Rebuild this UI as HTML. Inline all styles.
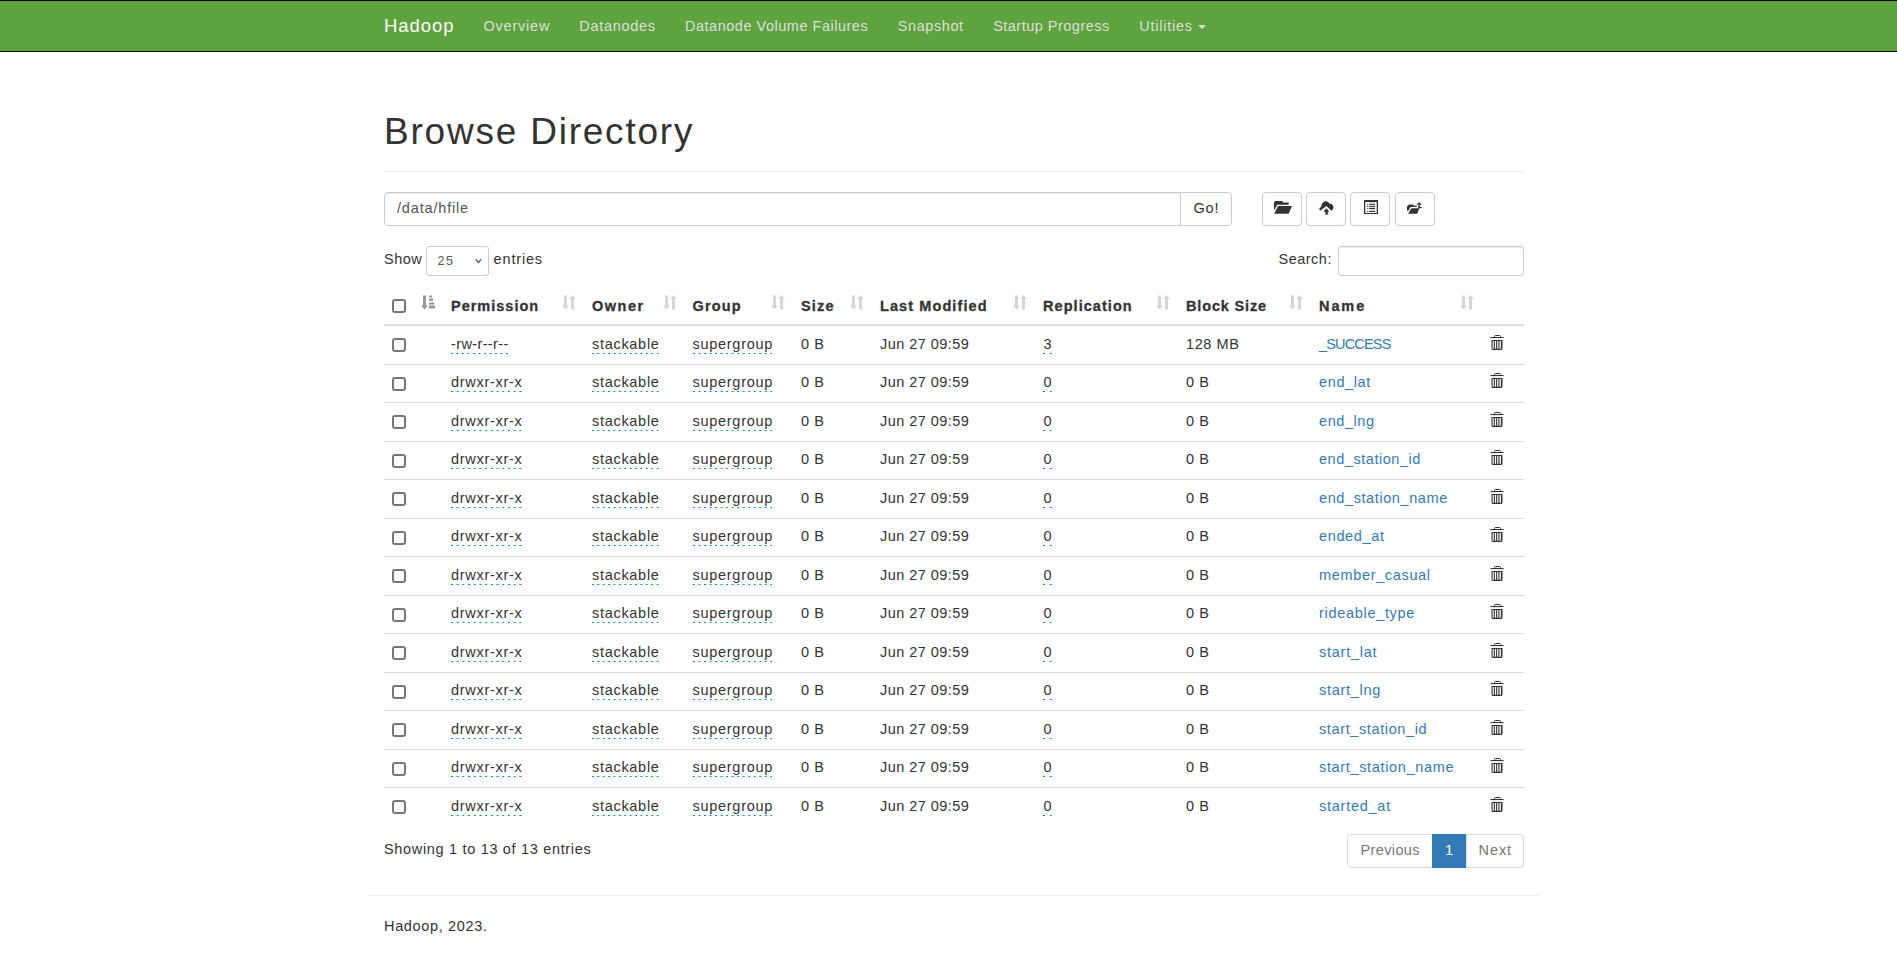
<!DOCTYPE html>
<html><head><meta charset="utf-8"><title>Browsing HDFS</title>
<style>
html,body{margin:0;padding:0;background:#fff;}
body{width:1897px;height:965px;overflow:hidden;position:relative;font-family:"Liberation Sans",sans-serif;}
.t{position:absolute;line-height:40px;white-space:pre;}
.cb{position:absolute;left:392px;width:14px;height:14px;box-sizing:border-box;border:2px solid #767680;border-radius:3px;background:#fff}
</style></head><body>
<div style="position:absolute;left:0px;top:0px;width:1897px;height:50px;background:#5fa33e;border-top:1px solid #080808;border-bottom:1px solid #080808"></div>
<div style="position:absolute;left:1198px;top:25px;width:0;height:0;border-left:4px solid transparent;border-right:4px solid transparent;border-top:4px solid #ddd"></div>
<div style="position:absolute;left:384px;top:171px;width:1140px;height:1px;background:#eee"></div>
<div style="position:absolute;left:384px;top:192px;width:795px;height:32px;border:1px solid #ccc;border-radius:4px 0 0 4px;box-shadow:inset 0 1px 1px rgba(0,0,0,.075);background:#fff"></div>
<div style="position:absolute;left:1180px;top:192px;width:50px;height:32px;border:1px solid #ccc;border-radius:0 4px 4px 0;background:#fff"></div>
<div style="position:absolute;left:1261.5px;top:192px;width:38px;height:32px;border:1px solid #ccc;border-radius:4px;background:#fff"></div>
<div style="position:absolute;left:1305.95px;top:192px;width:38px;height:32px;border:1px solid #ccc;border-radius:4px;background:#fff"></div>
<div style="position:absolute;left:1350.4px;top:192px;width:38px;height:32px;border:1px solid #ccc;border-radius:4px;background:#fff"></div>
<div style="position:absolute;left:1394.85px;top:192px;width:38px;height:32px;border:1px solid #ccc;border-radius:4px;background:#fff"></div>
<div style="position:absolute;left:426.2px;top:246px;width:60.5px;height:28px;border:1px solid #ccc;border-radius:3px;background:#fff"></div>
<div style="position:absolute;left:1338.4px;top:246px;width:183.6px;height:28px;border:1px solid #ccc;border-radius:3px;background:#fff;box-shadow:inset 0 1px 1px rgba(0,0,0,.075)"></div>
<div style="position:absolute;left:384px;top:324px;width:1140px;height:2px;background:#ddd"></div>
<div style="position:absolute;left:384px;top:364px;width:1140px;height:1px;background:#ddd"></div>
<div style="position:absolute;left:384px;top:402px;width:1140px;height:1px;background:#ddd"></div>
<div style="position:absolute;left:384px;top:441px;width:1140px;height:1px;background:#ddd"></div>
<div style="position:absolute;left:384px;top:479px;width:1140px;height:1px;background:#ddd"></div>
<div style="position:absolute;left:384px;top:518px;width:1140px;height:1px;background:#ddd"></div>
<div style="position:absolute;left:384px;top:556px;width:1140px;height:1px;background:#ddd"></div>
<div style="position:absolute;left:384px;top:595px;width:1140px;height:1px;background:#ddd"></div>
<div style="position:absolute;left:384px;top:633px;width:1140px;height:1px;background:#ddd"></div>
<div style="position:absolute;left:384px;top:672px;width:1140px;height:1px;background:#ddd"></div>
<div style="position:absolute;left:384px;top:710px;width:1140px;height:1px;background:#ddd"></div>
<div style="position:absolute;left:384px;top:749px;width:1140px;height:1px;background:#ddd"></div>
<div style="position:absolute;left:384px;top:787px;width:1140px;height:1px;background:#ddd"></div>
<div style="position:absolute;left:1347.4px;top:834px;width:83.2px;height:32px;border:1px solid #ddd;border-radius:4px 0 0 4px;background:#fff"></div>
<div style="position:absolute;left:1465.5px;top:834px;width:56.6px;height:32px;border:1px solid #ddd;border-radius:0 4px 4px 0;background:#fff"></div>
<div style="position:absolute;left:1431.6px;top:834px;width:32.9px;height:32px;border:1px solid #337ab7;background:#337ab7"></div>
<div style="position:absolute;left:369px;top:895px;width:1170px;height:1px;background:#eee"></div>
<div class="t" style="left:384.00px;top:6px;font-size:18.5px;letter-spacing:0.928px;color:#fff">Hadoop</div>
<div class="t" style="left:483.44px;top:6px;font-size:14.5px;letter-spacing:0.783px;color:#ddd">Overview</div>
<div class="t" style="left:579.35px;top:6px;font-size:14.5px;letter-spacing:0.691px;color:#ddd">Datanodes</div>
<div class="t" style="left:685.01px;top:6px;font-size:14.5px;letter-spacing:0.514px;color:#ddd">Datanode Volume Failures</div>
<div class="t" style="left:897.71px;top:6px;font-size:14.5px;letter-spacing:0.596px;color:#ddd">Snapshot</div>
<div class="t" style="left:993.15px;top:6px;font-size:14.5px;letter-spacing:0.490px;color:#ddd">Startup Progress</div>
<div class="t" style="left:1139.31px;top:6px;font-size:14.5px;letter-spacing:0.746px;color:#ddd">Utilities</div>
<div class="t" style="left:384.00px;top:112px;font-size:37px;letter-spacing:1.784px;color:#333">Browse Directory</div>
<div class="t" style="left:397.00px;top:188px;font-size:14.5px;letter-spacing:0.828px;color:#555">/data/hfile</div>
<div class="t" style="left:1193.50px;top:188px;font-size:14.5px;letter-spacing:0.828px;color:#333">Go!</div>
<div class="t" style="left:384.00px;top:239px;font-size:14.5px;letter-spacing:0.500px;color:#333">Show</div>
<div class="t" style="left:437.50px;top:241px;font-size:12.4px;letter-spacing:1.484px;color:#555">25</div>
<div class="t" style="left:493.60px;top:239px;font-size:14.5px;letter-spacing:0.833px;color:#333">entries</div>
<div class="t" style="left:1278.60px;top:239px;font-size:14.5px;letter-spacing:0.474px;color:#333">Search:</div>
<div class="t" style="left:451.00px;top:286px;font-size:14.5px;letter-spacing:0.993px;color:#333;font-weight:bold;-webkit-text-stroke:0.3px #333">Permission</div>
<div class="t" style="left:592.00px;top:286px;font-size:14.5px;letter-spacing:1.520px;color:#333;font-weight:bold;-webkit-text-stroke:0.3px #333">Owner</div>
<div class="t" style="left:692.50px;top:286px;font-size:14.5px;letter-spacing:1.129px;color:#333;font-weight:bold;-webkit-text-stroke:0.3px #333">Group</div>
<div class="t" style="left:801.00px;top:286px;font-size:14.5px;letter-spacing:1.172px;color:#333;font-weight:bold;-webkit-text-stroke:0.3px #333">Size</div>
<div class="t" style="left:880.00px;top:286px;font-size:14.5px;letter-spacing:1.090px;color:#333;font-weight:bold;-webkit-text-stroke:0.3px #333">Last Modified</div>
<div class="t" style="left:1043.00px;top:286px;font-size:14.5px;letter-spacing:1.056px;color:#333;font-weight:bold;-webkit-text-stroke:0.3px #333">Replication</div>
<div class="t" style="left:1186.00px;top:286px;font-size:14.5px;letter-spacing:0.842px;color:#333;font-weight:bold;-webkit-text-stroke:0.3px #333">Block Size</div>
<div class="t" style="left:1319.00px;top:286px;font-size:14.5px;letter-spacing:1.917px;color:#333;font-weight:bold;-webkit-text-stroke:0.3px #333">Name</div>
<div class="t" style="left:451.00px;top:324px;font-size:14.5px;letter-spacing:0.368px;color:#333"><span style="display:inline-block;width:57.25px;height:40px;position:relative">-rw-r--r--<i style="position:absolute;left:0;width:57.25px;top:29px;height:1px;background:linear-gradient(to right,#0088cc 2.2px,transparent 2.2px) 0 0/5.505px 1px repeat-x"></i></span></div>
<div class="t" style="left:592.00px;top:324px;font-size:14.5px;letter-spacing:0.703px;color:#333"><span style="display:inline-block;width:66.89px;height:40px;position:relative">stackable<i style="position:absolute;left:0;width:66.89px;top:29px;height:1px;background:linear-gradient(to right,#0088cc 2.2px,transparent 2.2px) 0 0/5.391px 1px repeat-x"></i></span></div>
<div class="t" style="left:692.50px;top:324px;font-size:14.5px;letter-spacing:0.720px;color:#333"><span style="display:inline-block;width:79.84px;height:40px;position:relative">supergroup<i style="position:absolute;left:0;width:79.84px;top:29px;height:1px;background:linear-gradient(to right,#0088cc 2.2px,transparent 2.2px) 0 0/5.546px 1px repeat-x"></i></span></div>
<div class="t" style="left:801.00px;top:324px;font-size:14.5px;letter-spacing:0.602px;color:#333">0 B</div>
<div class="t" style="left:880.00px;top:324px;font-size:14.5px;letter-spacing:0.462px;color:#333">Jun 27 09:59</div>
<div class="t" style="left:1043.42px;top:324px;font-size:14.5px;letter-spacing:0.844px;color:#333"><span style="display:inline-block;width:8.92px;height:40px;position:relative">3<i style="position:absolute;left:0;width:8.92px;top:29px;height:1px;background:linear-gradient(to right,#0088cc 2.2px,transparent 2.2px) 0 0/6.722px 1px repeat-x"></i></span></div>
<div class="t" style="left:1186.00px;top:324px;font-size:14.5px;letter-spacing:0.575px;color:#333">128 MB</div>
<div class="t" style="left:1319.00px;top:324px;font-size:14.5px;letter-spacing:-0.837px;color:#337ab7">_SUCCESS</div>
<div class="t" style="left:451.00px;top:362px;font-size:14.5px;letter-spacing:0.705px;color:#333"><span style="display:inline-block;width:70.78px;height:40px;position:relative">drwxr-xr-x<i style="position:absolute;left:0;width:70.78px;top:29px;height:1px;background:linear-gradient(to right,#0088cc 2.2px,transparent 2.2px) 0 0/5.715px 1px repeat-x"></i></span></div>
<div class="t" style="left:592.00px;top:362px;font-size:14.5px;letter-spacing:0.703px;color:#333"><span style="display:inline-block;width:66.89px;height:40px;position:relative">stackable<i style="position:absolute;left:0;width:66.89px;top:29px;height:1px;background:linear-gradient(to right,#0088cc 2.2px,transparent 2.2px) 0 0/5.391px 1px repeat-x"></i></span></div>
<div class="t" style="left:692.50px;top:362px;font-size:14.5px;letter-spacing:0.720px;color:#333"><span style="display:inline-block;width:79.84px;height:40px;position:relative">supergroup<i style="position:absolute;left:0;width:79.84px;top:29px;height:1px;background:linear-gradient(to right,#0088cc 2.2px,transparent 2.2px) 0 0/5.546px 1px repeat-x"></i></span></div>
<div class="t" style="left:801.00px;top:362px;font-size:14.5px;letter-spacing:0.602px;color:#333">0 B</div>
<div class="t" style="left:880.00px;top:362px;font-size:14.5px;letter-spacing:0.462px;color:#333">Jun 27 09:59</div>
<div class="t" style="left:1043.42px;top:362px;font-size:14.5px;letter-spacing:0.844px;color:#333"><span style="display:inline-block;width:8.92px;height:40px;position:relative">0<i style="position:absolute;left:0;width:8.92px;top:29px;height:1px;background:linear-gradient(to right,#0088cc 2.2px,transparent 2.2px) 0 0/6.722px 1px repeat-x"></i></span></div>
<div class="t" style="left:1186.00px;top:362px;font-size:14.5px;letter-spacing:0.602px;color:#333">0 B</div>
<div class="t" style="left:1319.00px;top:362px;font-size:14.5px;letter-spacing:0.628px;color:#337ab7">end_lat</div>
<div class="t" style="left:451.00px;top:401px;font-size:14.5px;letter-spacing:0.705px;color:#333"><span style="display:inline-block;width:70.78px;height:40px;position:relative">drwxr-xr-x<i style="position:absolute;left:0;width:70.78px;top:29px;height:1px;background:linear-gradient(to right,#0088cc 2.2px,transparent 2.2px) 0 0/5.715px 1px repeat-x"></i></span></div>
<div class="t" style="left:592.00px;top:401px;font-size:14.5px;letter-spacing:0.703px;color:#333"><span style="display:inline-block;width:66.89px;height:40px;position:relative">stackable<i style="position:absolute;left:0;width:66.89px;top:29px;height:1px;background:linear-gradient(to right,#0088cc 2.2px,transparent 2.2px) 0 0/5.391px 1px repeat-x"></i></span></div>
<div class="t" style="left:692.50px;top:401px;font-size:14.5px;letter-spacing:0.720px;color:#333"><span style="display:inline-block;width:79.84px;height:40px;position:relative">supergroup<i style="position:absolute;left:0;width:79.84px;top:29px;height:1px;background:linear-gradient(to right,#0088cc 2.2px,transparent 2.2px) 0 0/5.546px 1px repeat-x"></i></span></div>
<div class="t" style="left:801.00px;top:401px;font-size:14.5px;letter-spacing:0.602px;color:#333">0 B</div>
<div class="t" style="left:880.00px;top:401px;font-size:14.5px;letter-spacing:0.462px;color:#333">Jun 27 09:59</div>
<div class="t" style="left:1043.42px;top:401px;font-size:14.5px;letter-spacing:0.844px;color:#333"><span style="display:inline-block;width:8.92px;height:40px;position:relative">0<i style="position:absolute;left:0;width:8.92px;top:29px;height:1px;background:linear-gradient(to right,#0088cc 2.2px,transparent 2.2px) 0 0/6.722px 1px repeat-x"></i></span></div>
<div class="t" style="left:1186.00px;top:401px;font-size:14.5px;letter-spacing:0.602px;color:#333">0 B</div>
<div class="t" style="left:1319.00px;top:401px;font-size:14.5px;letter-spacing:0.570px;color:#337ab7">end_lng</div>
<div class="t" style="left:451.00px;top:439px;font-size:14.5px;letter-spacing:0.705px;color:#333"><span style="display:inline-block;width:70.78px;height:40px;position:relative">drwxr-xr-x<i style="position:absolute;left:0;width:70.78px;top:29px;height:1px;background:linear-gradient(to right,#0088cc 2.2px,transparent 2.2px) 0 0/5.715px 1px repeat-x"></i></span></div>
<div class="t" style="left:592.00px;top:439px;font-size:14.5px;letter-spacing:0.703px;color:#333"><span style="display:inline-block;width:66.89px;height:40px;position:relative">stackable<i style="position:absolute;left:0;width:66.89px;top:29px;height:1px;background:linear-gradient(to right,#0088cc 2.2px,transparent 2.2px) 0 0/5.391px 1px repeat-x"></i></span></div>
<div class="t" style="left:692.50px;top:439px;font-size:14.5px;letter-spacing:0.720px;color:#333"><span style="display:inline-block;width:79.84px;height:40px;position:relative">supergroup<i style="position:absolute;left:0;width:79.84px;top:29px;height:1px;background:linear-gradient(to right,#0088cc 2.2px,transparent 2.2px) 0 0/5.546px 1px repeat-x"></i></span></div>
<div class="t" style="left:801.00px;top:439px;font-size:14.5px;letter-spacing:0.602px;color:#333">0 B</div>
<div class="t" style="left:880.00px;top:439px;font-size:14.5px;letter-spacing:0.462px;color:#333">Jun 27 09:59</div>
<div class="t" style="left:1043.42px;top:439px;font-size:14.5px;letter-spacing:0.844px;color:#333"><span style="display:inline-block;width:8.92px;height:40px;position:relative">0<i style="position:absolute;left:0;width:8.92px;top:29px;height:1px;background:linear-gradient(to right,#0088cc 2.2px,transparent 2.2px) 0 0/6.722px 1px repeat-x"></i></span></div>
<div class="t" style="left:1186.00px;top:439px;font-size:14.5px;letter-spacing:0.602px;color:#333">0 B</div>
<div class="t" style="left:1319.00px;top:439px;font-size:14.5px;letter-spacing:0.540px;color:#337ab7">end_station_id</div>
<div class="t" style="left:451.00px;top:478px;font-size:14.5px;letter-spacing:0.705px;color:#333"><span style="display:inline-block;width:70.78px;height:40px;position:relative">drwxr-xr-x<i style="position:absolute;left:0;width:70.78px;top:29px;height:1px;background:linear-gradient(to right,#0088cc 2.2px,transparent 2.2px) 0 0/5.715px 1px repeat-x"></i></span></div>
<div class="t" style="left:592.00px;top:478px;font-size:14.5px;letter-spacing:0.703px;color:#333"><span style="display:inline-block;width:66.89px;height:40px;position:relative">stackable<i style="position:absolute;left:0;width:66.89px;top:29px;height:1px;background:linear-gradient(to right,#0088cc 2.2px,transparent 2.2px) 0 0/5.391px 1px repeat-x"></i></span></div>
<div class="t" style="left:692.50px;top:478px;font-size:14.5px;letter-spacing:0.720px;color:#333"><span style="display:inline-block;width:79.84px;height:40px;position:relative">supergroup<i style="position:absolute;left:0;width:79.84px;top:29px;height:1px;background:linear-gradient(to right,#0088cc 2.2px,transparent 2.2px) 0 0/5.546px 1px repeat-x"></i></span></div>
<div class="t" style="left:801.00px;top:478px;font-size:14.5px;letter-spacing:0.602px;color:#333">0 B</div>
<div class="t" style="left:880.00px;top:478px;font-size:14.5px;letter-spacing:0.462px;color:#333">Jun 27 09:59</div>
<div class="t" style="left:1043.42px;top:478px;font-size:14.5px;letter-spacing:0.844px;color:#333"><span style="display:inline-block;width:8.92px;height:40px;position:relative">0<i style="position:absolute;left:0;width:8.92px;top:29px;height:1px;background:linear-gradient(to right,#0088cc 2.2px,transparent 2.2px) 0 0/6.722px 1px repeat-x"></i></span></div>
<div class="t" style="left:1186.00px;top:478px;font-size:14.5px;letter-spacing:0.602px;color:#333">0 B</div>
<div class="t" style="left:1319.00px;top:478px;font-size:14.5px;letter-spacing:0.596px;color:#337ab7">end_station_name</div>
<div class="t" style="left:451.00px;top:516px;font-size:14.5px;letter-spacing:0.705px;color:#333"><span style="display:inline-block;width:70.78px;height:40px;position:relative">drwxr-xr-x<i style="position:absolute;left:0;width:70.78px;top:29px;height:1px;background:linear-gradient(to right,#0088cc 2.2px,transparent 2.2px) 0 0/5.715px 1px repeat-x"></i></span></div>
<div class="t" style="left:592.00px;top:516px;font-size:14.5px;letter-spacing:0.703px;color:#333"><span style="display:inline-block;width:66.89px;height:40px;position:relative">stackable<i style="position:absolute;left:0;width:66.89px;top:29px;height:1px;background:linear-gradient(to right,#0088cc 2.2px,transparent 2.2px) 0 0/5.391px 1px repeat-x"></i></span></div>
<div class="t" style="left:692.50px;top:516px;font-size:14.5px;letter-spacing:0.720px;color:#333"><span style="display:inline-block;width:79.84px;height:40px;position:relative">supergroup<i style="position:absolute;left:0;width:79.84px;top:29px;height:1px;background:linear-gradient(to right,#0088cc 2.2px,transparent 2.2px) 0 0/5.546px 1px repeat-x"></i></span></div>
<div class="t" style="left:801.00px;top:516px;font-size:14.5px;letter-spacing:0.602px;color:#333">0 B</div>
<div class="t" style="left:880.00px;top:516px;font-size:14.5px;letter-spacing:0.462px;color:#333">Jun 27 09:59</div>
<div class="t" style="left:1043.42px;top:516px;font-size:14.5px;letter-spacing:0.844px;color:#333"><span style="display:inline-block;width:8.92px;height:40px;position:relative">0<i style="position:absolute;left:0;width:8.92px;top:29px;height:1px;background:linear-gradient(to right,#0088cc 2.2px,transparent 2.2px) 0 0/6.722px 1px repeat-x"></i></span></div>
<div class="t" style="left:1186.00px;top:516px;font-size:14.5px;letter-spacing:0.602px;color:#333">0 B</div>
<div class="t" style="left:1319.00px;top:516px;font-size:14.5px;letter-spacing:0.638px;color:#337ab7">ended_at</div>
<div class="t" style="left:451.00px;top:555px;font-size:14.5px;letter-spacing:0.705px;color:#333"><span style="display:inline-block;width:70.78px;height:40px;position:relative">drwxr-xr-x<i style="position:absolute;left:0;width:70.78px;top:29px;height:1px;background:linear-gradient(to right,#0088cc 2.2px,transparent 2.2px) 0 0/5.715px 1px repeat-x"></i></span></div>
<div class="t" style="left:592.00px;top:555px;font-size:14.5px;letter-spacing:0.703px;color:#333"><span style="display:inline-block;width:66.89px;height:40px;position:relative">stackable<i style="position:absolute;left:0;width:66.89px;top:29px;height:1px;background:linear-gradient(to right,#0088cc 2.2px,transparent 2.2px) 0 0/5.391px 1px repeat-x"></i></span></div>
<div class="t" style="left:692.50px;top:555px;font-size:14.5px;letter-spacing:0.720px;color:#333"><span style="display:inline-block;width:79.84px;height:40px;position:relative">supergroup<i style="position:absolute;left:0;width:79.84px;top:29px;height:1px;background:linear-gradient(to right,#0088cc 2.2px,transparent 2.2px) 0 0/5.546px 1px repeat-x"></i></span></div>
<div class="t" style="left:801.00px;top:555px;font-size:14.5px;letter-spacing:0.602px;color:#333">0 B</div>
<div class="t" style="left:880.00px;top:555px;font-size:14.5px;letter-spacing:0.462px;color:#333">Jun 27 09:59</div>
<div class="t" style="left:1043.42px;top:555px;font-size:14.5px;letter-spacing:0.844px;color:#333"><span style="display:inline-block;width:8.92px;height:40px;position:relative">0<i style="position:absolute;left:0;width:8.92px;top:29px;height:1px;background:linear-gradient(to right,#0088cc 2.2px,transparent 2.2px) 0 0/6.722px 1px repeat-x"></i></span></div>
<div class="t" style="left:1186.00px;top:555px;font-size:14.5px;letter-spacing:0.602px;color:#333">0 B</div>
<div class="t" style="left:1319.00px;top:555px;font-size:14.5px;letter-spacing:0.658px;color:#337ab7">member_casual</div>
<div class="t" style="left:451.00px;top:593px;font-size:14.5px;letter-spacing:0.705px;color:#333"><span style="display:inline-block;width:70.78px;height:40px;position:relative">drwxr-xr-x<i style="position:absolute;left:0;width:70.78px;top:29px;height:1px;background:linear-gradient(to right,#0088cc 2.2px,transparent 2.2px) 0 0/5.715px 1px repeat-x"></i></span></div>
<div class="t" style="left:592.00px;top:593px;font-size:14.5px;letter-spacing:0.703px;color:#333"><span style="display:inline-block;width:66.89px;height:40px;position:relative">stackable<i style="position:absolute;left:0;width:66.89px;top:29px;height:1px;background:linear-gradient(to right,#0088cc 2.2px,transparent 2.2px) 0 0/5.391px 1px repeat-x"></i></span></div>
<div class="t" style="left:692.50px;top:593px;font-size:14.5px;letter-spacing:0.720px;color:#333"><span style="display:inline-block;width:79.84px;height:40px;position:relative">supergroup<i style="position:absolute;left:0;width:79.84px;top:29px;height:1px;background:linear-gradient(to right,#0088cc 2.2px,transparent 2.2px) 0 0/5.546px 1px repeat-x"></i></span></div>
<div class="t" style="left:801.00px;top:593px;font-size:14.5px;letter-spacing:0.602px;color:#333">0 B</div>
<div class="t" style="left:880.00px;top:593px;font-size:14.5px;letter-spacing:0.462px;color:#333">Jun 27 09:59</div>
<div class="t" style="left:1043.42px;top:593px;font-size:14.5px;letter-spacing:0.844px;color:#333"><span style="display:inline-block;width:8.92px;height:40px;position:relative">0<i style="position:absolute;left:0;width:8.92px;top:29px;height:1px;background:linear-gradient(to right,#0088cc 2.2px,transparent 2.2px) 0 0/6.722px 1px repeat-x"></i></span></div>
<div class="t" style="left:1186.00px;top:593px;font-size:14.5px;letter-spacing:0.602px;color:#333">0 B</div>
<div class="t" style="left:1319.00px;top:593px;font-size:14.5px;letter-spacing:0.693px;color:#337ab7">rideable_type</div>
<div class="t" style="left:451.00px;top:632px;font-size:14.5px;letter-spacing:0.705px;color:#333"><span style="display:inline-block;width:70.78px;height:40px;position:relative">drwxr-xr-x<i style="position:absolute;left:0;width:70.78px;top:29px;height:1px;background:linear-gradient(to right,#0088cc 2.2px,transparent 2.2px) 0 0/5.715px 1px repeat-x"></i></span></div>
<div class="t" style="left:592.00px;top:632px;font-size:14.5px;letter-spacing:0.703px;color:#333"><span style="display:inline-block;width:66.89px;height:40px;position:relative">stackable<i style="position:absolute;left:0;width:66.89px;top:29px;height:1px;background:linear-gradient(to right,#0088cc 2.2px,transparent 2.2px) 0 0/5.391px 1px repeat-x"></i></span></div>
<div class="t" style="left:692.50px;top:632px;font-size:14.5px;letter-spacing:0.720px;color:#333"><span style="display:inline-block;width:79.84px;height:40px;position:relative">supergroup<i style="position:absolute;left:0;width:79.84px;top:29px;height:1px;background:linear-gradient(to right,#0088cc 2.2px,transparent 2.2px) 0 0/5.546px 1px repeat-x"></i></span></div>
<div class="t" style="left:801.00px;top:632px;font-size:14.5px;letter-spacing:0.602px;color:#333">0 B</div>
<div class="t" style="left:880.00px;top:632px;font-size:14.5px;letter-spacing:0.462px;color:#333">Jun 27 09:59</div>
<div class="t" style="left:1043.42px;top:632px;font-size:14.5px;letter-spacing:0.844px;color:#333"><span style="display:inline-block;width:8.92px;height:40px;position:relative">0<i style="position:absolute;left:0;width:8.92px;top:29px;height:1px;background:linear-gradient(to right,#0088cc 2.2px,transparent 2.2px) 0 0/6.722px 1px repeat-x"></i></span></div>
<div class="t" style="left:1186.00px;top:632px;font-size:14.5px;letter-spacing:0.602px;color:#333">0 B</div>
<div class="t" style="left:1319.00px;top:632px;font-size:14.5px;letter-spacing:0.748px;color:#337ab7">start_lat</div>
<div class="t" style="left:451.00px;top:670px;font-size:14.5px;letter-spacing:0.705px;color:#333"><span style="display:inline-block;width:70.78px;height:40px;position:relative">drwxr-xr-x<i style="position:absolute;left:0;width:70.78px;top:29px;height:1px;background:linear-gradient(to right,#0088cc 2.2px,transparent 2.2px) 0 0/5.715px 1px repeat-x"></i></span></div>
<div class="t" style="left:592.00px;top:670px;font-size:14.5px;letter-spacing:0.703px;color:#333"><span style="display:inline-block;width:66.89px;height:40px;position:relative">stackable<i style="position:absolute;left:0;width:66.89px;top:29px;height:1px;background:linear-gradient(to right,#0088cc 2.2px,transparent 2.2px) 0 0/5.391px 1px repeat-x"></i></span></div>
<div class="t" style="left:692.50px;top:670px;font-size:14.5px;letter-spacing:0.720px;color:#333"><span style="display:inline-block;width:79.84px;height:40px;position:relative">supergroup<i style="position:absolute;left:0;width:79.84px;top:29px;height:1px;background:linear-gradient(to right,#0088cc 2.2px,transparent 2.2px) 0 0/5.546px 1px repeat-x"></i></span></div>
<div class="t" style="left:801.00px;top:670px;font-size:14.5px;letter-spacing:0.602px;color:#333">0 B</div>
<div class="t" style="left:880.00px;top:670px;font-size:14.5px;letter-spacing:0.462px;color:#333">Jun 27 09:59</div>
<div class="t" style="left:1043.42px;top:670px;font-size:14.5px;letter-spacing:0.844px;color:#333"><span style="display:inline-block;width:8.92px;height:40px;position:relative">0<i style="position:absolute;left:0;width:8.92px;top:29px;height:1px;background:linear-gradient(to right,#0088cc 2.2px,transparent 2.2px) 0 0/6.722px 1px repeat-x"></i></span></div>
<div class="t" style="left:1186.00px;top:670px;font-size:14.5px;letter-spacing:0.602px;color:#333">0 B</div>
<div class="t" style="left:1319.00px;top:670px;font-size:14.5px;letter-spacing:0.705px;color:#337ab7">start_lng</div>
<div class="t" style="left:451.00px;top:709px;font-size:14.5px;letter-spacing:0.705px;color:#333"><span style="display:inline-block;width:70.78px;height:40px;position:relative">drwxr-xr-x<i style="position:absolute;left:0;width:70.78px;top:29px;height:1px;background:linear-gradient(to right,#0088cc 2.2px,transparent 2.2px) 0 0/5.715px 1px repeat-x"></i></span></div>
<div class="t" style="left:592.00px;top:709px;font-size:14.5px;letter-spacing:0.703px;color:#333"><span style="display:inline-block;width:66.89px;height:40px;position:relative">stackable<i style="position:absolute;left:0;width:66.89px;top:29px;height:1px;background:linear-gradient(to right,#0088cc 2.2px,transparent 2.2px) 0 0/5.391px 1px repeat-x"></i></span></div>
<div class="t" style="left:692.50px;top:709px;font-size:14.5px;letter-spacing:0.720px;color:#333"><span style="display:inline-block;width:79.84px;height:40px;position:relative">supergroup<i style="position:absolute;left:0;width:79.84px;top:29px;height:1px;background:linear-gradient(to right,#0088cc 2.2px,transparent 2.2px) 0 0/5.546px 1px repeat-x"></i></span></div>
<div class="t" style="left:801.00px;top:709px;font-size:14.5px;letter-spacing:0.602px;color:#333">0 B</div>
<div class="t" style="left:880.00px;top:709px;font-size:14.5px;letter-spacing:0.462px;color:#333">Jun 27 09:59</div>
<div class="t" style="left:1043.42px;top:709px;font-size:14.5px;letter-spacing:0.844px;color:#333"><span style="display:inline-block;width:8.92px;height:40px;position:relative">0<i style="position:absolute;left:0;width:8.92px;top:29px;height:1px;background:linear-gradient(to right,#0088cc 2.2px,transparent 2.2px) 0 0/6.722px 1px repeat-x"></i></span></div>
<div class="t" style="left:1186.00px;top:709px;font-size:14.5px;letter-spacing:0.602px;color:#333">0 B</div>
<div class="t" style="left:1319.00px;top:709px;font-size:14.5px;letter-spacing:0.616px;color:#337ab7">start_station_id</div>
<div class="t" style="left:451.00px;top:747px;font-size:14.5px;letter-spacing:0.705px;color:#333"><span style="display:inline-block;width:70.78px;height:40px;position:relative">drwxr-xr-x<i style="position:absolute;left:0;width:70.78px;top:29px;height:1px;background:linear-gradient(to right,#0088cc 2.2px,transparent 2.2px) 0 0/5.715px 1px repeat-x"></i></span></div>
<div class="t" style="left:592.00px;top:747px;font-size:14.5px;letter-spacing:0.703px;color:#333"><span style="display:inline-block;width:66.89px;height:40px;position:relative">stackable<i style="position:absolute;left:0;width:66.89px;top:29px;height:1px;background:linear-gradient(to right,#0088cc 2.2px,transparent 2.2px) 0 0/5.391px 1px repeat-x"></i></span></div>
<div class="t" style="left:692.50px;top:747px;font-size:14.5px;letter-spacing:0.720px;color:#333"><span style="display:inline-block;width:79.84px;height:40px;position:relative">supergroup<i style="position:absolute;left:0;width:79.84px;top:29px;height:1px;background:linear-gradient(to right,#0088cc 2.2px,transparent 2.2px) 0 0/5.546px 1px repeat-x"></i></span></div>
<div class="t" style="left:801.00px;top:747px;font-size:14.5px;letter-spacing:0.602px;color:#333">0 B</div>
<div class="t" style="left:880.00px;top:747px;font-size:14.5px;letter-spacing:0.462px;color:#333">Jun 27 09:59</div>
<div class="t" style="left:1043.42px;top:747px;font-size:14.5px;letter-spacing:0.844px;color:#333"><span style="display:inline-block;width:8.92px;height:40px;position:relative">0<i style="position:absolute;left:0;width:8.92px;top:29px;height:1px;background:linear-gradient(to right,#0088cc 2.2px,transparent 2.2px) 0 0/6.722px 1px repeat-x"></i></span></div>
<div class="t" style="left:1186.00px;top:747px;font-size:14.5px;letter-spacing:0.602px;color:#333">0 B</div>
<div class="t" style="left:1319.00px;top:747px;font-size:14.5px;letter-spacing:0.657px;color:#337ab7">start_station_name</div>
<div class="t" style="left:451.00px;top:786px;font-size:14.5px;letter-spacing:0.705px;color:#333"><span style="display:inline-block;width:70.78px;height:40px;position:relative">drwxr-xr-x<i style="position:absolute;left:0;width:70.78px;top:29px;height:1px;background:linear-gradient(to right,#0088cc 2.2px,transparent 2.2px) 0 0/5.715px 1px repeat-x"></i></span></div>
<div class="t" style="left:592.00px;top:786px;font-size:14.5px;letter-spacing:0.703px;color:#333"><span style="display:inline-block;width:66.89px;height:40px;position:relative">stackable<i style="position:absolute;left:0;width:66.89px;top:29px;height:1px;background:linear-gradient(to right,#0088cc 2.2px,transparent 2.2px) 0 0/5.391px 1px repeat-x"></i></span></div>
<div class="t" style="left:692.50px;top:786px;font-size:14.5px;letter-spacing:0.720px;color:#333"><span style="display:inline-block;width:79.84px;height:40px;position:relative">supergroup<i style="position:absolute;left:0;width:79.84px;top:29px;height:1px;background:linear-gradient(to right,#0088cc 2.2px,transparent 2.2px) 0 0/5.546px 1px repeat-x"></i></span></div>
<div class="t" style="left:801.00px;top:786px;font-size:14.5px;letter-spacing:0.602px;color:#333">0 B</div>
<div class="t" style="left:880.00px;top:786px;font-size:14.5px;letter-spacing:0.462px;color:#333">Jun 27 09:59</div>
<div class="t" style="left:1043.42px;top:786px;font-size:14.5px;letter-spacing:0.844px;color:#333"><span style="display:inline-block;width:8.92px;height:40px;position:relative">0<i style="position:absolute;left:0;width:8.92px;top:29px;height:1px;background:linear-gradient(to right,#0088cc 2.2px,transparent 2.2px) 0 0/6.722px 1px repeat-x"></i></span></div>
<div class="t" style="left:1186.00px;top:786px;font-size:14.5px;letter-spacing:0.602px;color:#333">0 B</div>
<div class="t" style="left:1319.00px;top:786px;font-size:14.5px;letter-spacing:0.743px;color:#337ab7">started_at</div>
<div class="t" style="left:384.00px;top:829px;font-size:14.5px;letter-spacing:0.676px;color:#333">Showing 1 to 13 of 13 entries</div>
<div class="t" style="left:1360.40px;top:830px;font-size:14.5px;letter-spacing:0.393px;color:#777">Previous</div>
<div class="t" style="left:1445.02px;top:830px;font-size:14.5px;letter-spacing:0.844px;color:#fff">1</div>
<div class="t" style="left:1478.50px;top:830px;font-size:14.5px;letter-spacing:0.932px;color:#777">Next</div>
<div class="t" style="left:384.00px;top:906px;font-size:14.5px;letter-spacing:0.655px;color:#333">Hadoop, 2023.</div>
<svg style="position:absolute;left:421px;top:294.5px;overflow:visible" width="14" height="15" viewBox="0 0 14 15"><g fill="#999"><rect x="2" y="0.5" width="3" height="10.5"/><polygon points="0,10.5 7,10.5 3.5,14.5"/><rect x="8" y="0.5" width="3" height="2"/><rect x="8" y="3.5" width="4" height="2.4"/><rect x="8" y="7.5" width="5" height="2"/><rect x="8" y="10.5" width="6" height="3"/></g></svg>
<svg style="position:absolute;left:562px;top:294.5px;overflow:visible" width="14" height="15" viewBox="0 0 14 15"><g fill="#d6d6d6"><rect x="2" y="0.5" width="3" height="10.5"/><polygon points="0,10.5 7,10.5 3.5,14.5"/><rect x="9" y="4" width="3" height="10.5"/><polygon points="7,4 14,4 10.5,0.2"/></g></svg>
<svg style="position:absolute;left:662.5px;top:294.5px;overflow:visible" width="14" height="15" viewBox="0 0 14 15"><g fill="#d6d6d6"><rect x="2" y="0.5" width="3" height="10.5"/><polygon points="0,10.5 7,10.5 3.5,14.5"/><rect x="9" y="4" width="3" height="10.5"/><polygon points="7,4 14,4 10.5,0.2"/></g></svg>
<svg style="position:absolute;left:771px;top:294.5px;overflow:visible" width="14" height="15" viewBox="0 0 14 15"><g fill="#d6d6d6"><rect x="2" y="0.5" width="3" height="10.5"/><polygon points="0,10.5 7,10.5 3.5,14.5"/><rect x="9" y="4" width="3" height="10.5"/><polygon points="7,4 14,4 10.5,0.2"/></g></svg>
<svg style="position:absolute;left:850px;top:294.5px;overflow:visible" width="14" height="15" viewBox="0 0 14 15"><g fill="#d6d6d6"><rect x="2" y="0.5" width="3" height="10.5"/><polygon points="0,10.5 7,10.5 3.5,14.5"/><rect x="9" y="4" width="3" height="10.5"/><polygon points="7,4 14,4 10.5,0.2"/></g></svg>
<svg style="position:absolute;left:1013px;top:294.5px;overflow:visible" width="14" height="15" viewBox="0 0 14 15"><g fill="#d6d6d6"><rect x="2" y="0.5" width="3" height="10.5"/><polygon points="0,10.5 7,10.5 3.5,14.5"/><rect x="9" y="4" width="3" height="10.5"/><polygon points="7,4 14,4 10.5,0.2"/></g></svg>
<svg style="position:absolute;left:1156px;top:294.5px;overflow:visible" width="14" height="15" viewBox="0 0 14 15"><g fill="#d6d6d6"><rect x="2" y="0.5" width="3" height="10.5"/><polygon points="0,10.5 7,10.5 3.5,14.5"/><rect x="9" y="4" width="3" height="10.5"/><polygon points="7,4 14,4 10.5,0.2"/></g></svg>
<svg style="position:absolute;left:1289px;top:294.5px;overflow:visible" width="14" height="15" viewBox="0 0 14 15"><g fill="#d6d6d6"><rect x="2" y="0.5" width="3" height="10.5"/><polygon points="0,10.5 7,10.5 3.5,14.5"/><rect x="9" y="4" width="3" height="10.5"/><polygon points="7,4 14,4 10.5,0.2"/></g></svg>
<svg style="position:absolute;left:1460px;top:294.5px;overflow:visible" width="14" height="15" viewBox="0 0 14 15"><g fill="#d6d6d6"><rect x="2" y="0.5" width="3" height="10.5"/><polygon points="0,10.5 7,10.5 3.5,14.5"/><rect x="9" y="4" width="3" height="10.5"/><polygon points="7,4 14,4 10.5,0.2"/></g></svg>
<div class="cb" style="top:299px"></div>
<div class="cb" style="top:338px"></div>
<svg style="position:absolute;left:1490px;top:335px;overflow:visible" width="14" height="15" viewBox="0 0 14 15"><g fill="#333"><path d="M4.5,2.5 V1.5 a1,1 0 0 1 1,-1 h4 a1,1 0 0 1 1,1 V2.5" fill="none" stroke="#333" stroke-width="1"/><rect x="0.5" y="2" width="13" height="1.1"/><path d="M1.5,5 h11 v8.6 a1.3,1.3 0 0 1 -1.3,1.3 h-8.4 a1.3,1.3 0 0 1 -1.3,-1.3 z M2.6,6 v7.8 h1.2 v-7.8 z M4.9,6 v7.8 h1.2 v-7.8 z M7.2,6 v7.8 h1.2 v-7.8 z M9.5,6 v7.8 h1.4 v-7.8 z" fill-rule="evenodd"/></g></svg>
<div class="cb" style="top:377px"></div>
<svg style="position:absolute;left:1490px;top:373px;overflow:visible" width="14" height="15" viewBox="0 0 14 15"><g fill="#333"><path d="M4.5,2.5 V1.5 a1,1 0 0 1 1,-1 h4 a1,1 0 0 1 1,1 V2.5" fill="none" stroke="#333" stroke-width="1"/><rect x="0.5" y="2" width="13" height="1.1"/><path d="M1.5,5 h11 v8.6 a1.3,1.3 0 0 1 -1.3,1.3 h-8.4 a1.3,1.3 0 0 1 -1.3,-1.3 z M2.6,6 v7.8 h1.2 v-7.8 z M4.9,6 v7.8 h1.2 v-7.8 z M7.2,6 v7.8 h1.2 v-7.8 z M9.5,6 v7.8 h1.4 v-7.8 z" fill-rule="evenodd"/></g></svg>
<div class="cb" style="top:415px"></div>
<svg style="position:absolute;left:1490px;top:412px;overflow:visible" width="14" height="15" viewBox="0 0 14 15"><g fill="#333"><path d="M4.5,2.5 V1.5 a1,1 0 0 1 1,-1 h4 a1,1 0 0 1 1,1 V2.5" fill="none" stroke="#333" stroke-width="1"/><rect x="0.5" y="2" width="13" height="1.1"/><path d="M1.5,5 h11 v8.6 a1.3,1.3 0 0 1 -1.3,1.3 h-8.4 a1.3,1.3 0 0 1 -1.3,-1.3 z M2.6,6 v7.8 h1.2 v-7.8 z M4.9,6 v7.8 h1.2 v-7.8 z M7.2,6 v7.8 h1.2 v-7.8 z M9.5,6 v7.8 h1.4 v-7.8 z" fill-rule="evenodd"/></g></svg>
<div class="cb" style="top:454px"></div>
<svg style="position:absolute;left:1490px;top:450px;overflow:visible" width="14" height="15" viewBox="0 0 14 15"><g fill="#333"><path d="M4.5,2.5 V1.5 a1,1 0 0 1 1,-1 h4 a1,1 0 0 1 1,1 V2.5" fill="none" stroke="#333" stroke-width="1"/><rect x="0.5" y="2" width="13" height="1.1"/><path d="M1.5,5 h11 v8.6 a1.3,1.3 0 0 1 -1.3,1.3 h-8.4 a1.3,1.3 0 0 1 -1.3,-1.3 z M2.6,6 v7.8 h1.2 v-7.8 z M4.9,6 v7.8 h1.2 v-7.8 z M7.2,6 v7.8 h1.2 v-7.8 z M9.5,6 v7.8 h1.4 v-7.8 z" fill-rule="evenodd"/></g></svg>
<div class="cb" style="top:492px"></div>
<svg style="position:absolute;left:1490px;top:489px;overflow:visible" width="14" height="15" viewBox="0 0 14 15"><g fill="#333"><path d="M4.5,2.5 V1.5 a1,1 0 0 1 1,-1 h4 a1,1 0 0 1 1,1 V2.5" fill="none" stroke="#333" stroke-width="1"/><rect x="0.5" y="2" width="13" height="1.1"/><path d="M1.5,5 h11 v8.6 a1.3,1.3 0 0 1 -1.3,1.3 h-8.4 a1.3,1.3 0 0 1 -1.3,-1.3 z M2.6,6 v7.8 h1.2 v-7.8 z M4.9,6 v7.8 h1.2 v-7.8 z M7.2,6 v7.8 h1.2 v-7.8 z M9.5,6 v7.8 h1.4 v-7.8 z" fill-rule="evenodd"/></g></svg>
<div class="cb" style="top:531px"></div>
<svg style="position:absolute;left:1490px;top:527px;overflow:visible" width="14" height="15" viewBox="0 0 14 15"><g fill="#333"><path d="M4.5,2.5 V1.5 a1,1 0 0 1 1,-1 h4 a1,1 0 0 1 1,1 V2.5" fill="none" stroke="#333" stroke-width="1"/><rect x="0.5" y="2" width="13" height="1.1"/><path d="M1.5,5 h11 v8.6 a1.3,1.3 0 0 1 -1.3,1.3 h-8.4 a1.3,1.3 0 0 1 -1.3,-1.3 z M2.6,6 v7.8 h1.2 v-7.8 z M4.9,6 v7.8 h1.2 v-7.8 z M7.2,6 v7.8 h1.2 v-7.8 z M9.5,6 v7.8 h1.4 v-7.8 z" fill-rule="evenodd"/></g></svg>
<div class="cb" style="top:569px"></div>
<svg style="position:absolute;left:1490px;top:566px;overflow:visible" width="14" height="15" viewBox="0 0 14 15"><g fill="#333"><path d="M4.5,2.5 V1.5 a1,1 0 0 1 1,-1 h4 a1,1 0 0 1 1,1 V2.5" fill="none" stroke="#333" stroke-width="1"/><rect x="0.5" y="2" width="13" height="1.1"/><path d="M1.5,5 h11 v8.6 a1.3,1.3 0 0 1 -1.3,1.3 h-8.4 a1.3,1.3 0 0 1 -1.3,-1.3 z M2.6,6 v7.8 h1.2 v-7.8 z M4.9,6 v7.8 h1.2 v-7.8 z M7.2,6 v7.8 h1.2 v-7.8 z M9.5,6 v7.8 h1.4 v-7.8 z" fill-rule="evenodd"/></g></svg>
<div class="cb" style="top:608px"></div>
<svg style="position:absolute;left:1490px;top:604px;overflow:visible" width="14" height="15" viewBox="0 0 14 15"><g fill="#333"><path d="M4.5,2.5 V1.5 a1,1 0 0 1 1,-1 h4 a1,1 0 0 1 1,1 V2.5" fill="none" stroke="#333" stroke-width="1"/><rect x="0.5" y="2" width="13" height="1.1"/><path d="M1.5,5 h11 v8.6 a1.3,1.3 0 0 1 -1.3,1.3 h-8.4 a1.3,1.3 0 0 1 -1.3,-1.3 z M2.6,6 v7.8 h1.2 v-7.8 z M4.9,6 v7.8 h1.2 v-7.8 z M7.2,6 v7.8 h1.2 v-7.8 z M9.5,6 v7.8 h1.4 v-7.8 z" fill-rule="evenodd"/></g></svg>
<div class="cb" style="top:646px"></div>
<svg style="position:absolute;left:1490px;top:643px;overflow:visible" width="14" height="15" viewBox="0 0 14 15"><g fill="#333"><path d="M4.5,2.5 V1.5 a1,1 0 0 1 1,-1 h4 a1,1 0 0 1 1,1 V2.5" fill="none" stroke="#333" stroke-width="1"/><rect x="0.5" y="2" width="13" height="1.1"/><path d="M1.5,5 h11 v8.6 a1.3,1.3 0 0 1 -1.3,1.3 h-8.4 a1.3,1.3 0 0 1 -1.3,-1.3 z M2.6,6 v7.8 h1.2 v-7.8 z M4.9,6 v7.8 h1.2 v-7.8 z M7.2,6 v7.8 h1.2 v-7.8 z M9.5,6 v7.8 h1.4 v-7.8 z" fill-rule="evenodd"/></g></svg>
<div class="cb" style="top:685px"></div>
<svg style="position:absolute;left:1490px;top:681px;overflow:visible" width="14" height="15" viewBox="0 0 14 15"><g fill="#333"><path d="M4.5,2.5 V1.5 a1,1 0 0 1 1,-1 h4 a1,1 0 0 1 1,1 V2.5" fill="none" stroke="#333" stroke-width="1"/><rect x="0.5" y="2" width="13" height="1.1"/><path d="M1.5,5 h11 v8.6 a1.3,1.3 0 0 1 -1.3,1.3 h-8.4 a1.3,1.3 0 0 1 -1.3,-1.3 z M2.6,6 v7.8 h1.2 v-7.8 z M4.9,6 v7.8 h1.2 v-7.8 z M7.2,6 v7.8 h1.2 v-7.8 z M9.5,6 v7.8 h1.4 v-7.8 z" fill-rule="evenodd"/></g></svg>
<div class="cb" style="top:723px"></div>
<svg style="position:absolute;left:1490px;top:720px;overflow:visible" width="14" height="15" viewBox="0 0 14 15"><g fill="#333"><path d="M4.5,2.5 V1.5 a1,1 0 0 1 1,-1 h4 a1,1 0 0 1 1,1 V2.5" fill="none" stroke="#333" stroke-width="1"/><rect x="0.5" y="2" width="13" height="1.1"/><path d="M1.5,5 h11 v8.6 a1.3,1.3 0 0 1 -1.3,1.3 h-8.4 a1.3,1.3 0 0 1 -1.3,-1.3 z M2.6,6 v7.8 h1.2 v-7.8 z M4.9,6 v7.8 h1.2 v-7.8 z M7.2,6 v7.8 h1.2 v-7.8 z M9.5,6 v7.8 h1.4 v-7.8 z" fill-rule="evenodd"/></g></svg>
<div class="cb" style="top:762px"></div>
<svg style="position:absolute;left:1490px;top:758px;overflow:visible" width="14" height="15" viewBox="0 0 14 15"><g fill="#333"><path d="M4.5,2.5 V1.5 a1,1 0 0 1 1,-1 h4 a1,1 0 0 1 1,1 V2.5" fill="none" stroke="#333" stroke-width="1"/><rect x="0.5" y="2" width="13" height="1.1"/><path d="M1.5,5 h11 v8.6 a1.3,1.3 0 0 1 -1.3,1.3 h-8.4 a1.3,1.3 0 0 1 -1.3,-1.3 z M2.6,6 v7.8 h1.2 v-7.8 z M4.9,6 v7.8 h1.2 v-7.8 z M7.2,6 v7.8 h1.2 v-7.8 z M9.5,6 v7.8 h1.4 v-7.8 z" fill-rule="evenodd"/></g></svg>
<div class="cb" style="top:800px"></div>
<svg style="position:absolute;left:1490px;top:797px;overflow:visible" width="14" height="15" viewBox="0 0 14 15"><g fill="#333"><path d="M4.5,2.5 V1.5 a1,1 0 0 1 1,-1 h4 a1,1 0 0 1 1,1 V2.5" fill="none" stroke="#333" stroke-width="1"/><rect x="0.5" y="2" width="13" height="1.1"/><path d="M1.5,5 h11 v8.6 a1.3,1.3 0 0 1 -1.3,1.3 h-8.4 a1.3,1.3 0 0 1 -1.3,-1.3 z M2.6,6 v7.8 h1.2 v-7.8 z M4.9,6 v7.8 h1.2 v-7.8 z M7.2,6 v7.8 h1.2 v-7.8 z M9.5,6 v7.8 h1.4 v-7.8 z" fill-rule="evenodd"/></g></svg>
<svg style="position:absolute;left:1274px;top:201px;overflow:visible" width="18" height="13" viewBox="0 0 18 13"><g fill="#333"><path d="M0,1.2 L1.2,0 H8 L9,1.5 H14.7 V3.7 H3.1 L0.9,8.2 H0 Z"/><polygon points="4,5 17.9,5 14.7,12.8 0.2,12.8"/></g></svg>
<svg style="position:absolute;left:1318.6px;top:201px;overflow:visible" width="15" height="14" viewBox="0 0 15 14"><path fill="#333" d="M1.5,9.6 C0.5,9.4 0.2,8.4 0.4,7.5 C0.6,6.6 1.3,6 2.2,5.9 C2.4,2.8 4.3,0.2 6.9,0.2 C8.6,0.2 9.9,1.3 10.5,2.7 C12.6,2.3 14.4,4 14.4,6.2 C14.4,8.1 13.4,9.4 12.2,9.6 L7.4,5 Z"/><polygon fill="#333" points="7.4,7.2 10.4,10.7 8.8,10.7 8.8,13.7 6.4,13.7 6.4,10.7 4.4,10.7"/></svg>
<svg style="position:absolute;left:1364px;top:200px;overflow:visible" width="14" height="14" viewBox="0 0 14 14"><g fill="#333"><path fill-rule="evenodd" d="M0,0 H14 V14 H0 Z M1.3,2 V13 H12.7 V2 Z"/><rect x="3.2" y="3.8" width="1.1" height="1.1"/><rect x="5.2" y="3.8" width="5.8" height="1.1"/><rect x="3.2" y="5.9" width="1.1" height="1.1"/><rect x="5.2" y="5.9" width="5.8" height="1.1"/><rect x="3.2" y="7.9" width="1.1" height="1.1"/><rect x="5.2" y="7.9" width="5.8" height="1.1"/><rect x="3.2" y="10.9" width="1.1" height="1.1"/><rect x="5.2" y="10.9" width="5.8" height="1.1"/></g><g fill="#ccc"><rect x="5.2" y="2.2" width="5.8" height="1.2"/><rect x="5.2" y="9.2" width="5.8" height="1.3"/></g></svg>
<svg style="position:absolute;left:1407px;top:202px;overflow:visible" width="15" height="12" viewBox="0 0 15 12"><g fill="#333"><path d="M0,4.5 L2,2.5 H6 L7,3.7 H9.9 V5 H3.5 L1.4,8.7 H0 Z"/><polygon points="4.5,6.2 12.4,6.2 10.2,11.8 1,11.8"/><polygon points="12.2,0.1 9.4,2.7 14.7,2.7"/><rect x="11.4" y="2.6" width="1.5" height="3.6"/><rect x="11.4" y="5" width="3.5" height="1.2"/></g></svg>
<svg style="position:absolute;left:474.9px;top:258.8px;overflow:visible" width="7" height="5" viewBox="0 0 7 5"><polyline points="0.9,0.3 3.5,3.4 6.1,0.3" fill="none" stroke="#555" stroke-width="1.3"/></svg>
</body></html>
